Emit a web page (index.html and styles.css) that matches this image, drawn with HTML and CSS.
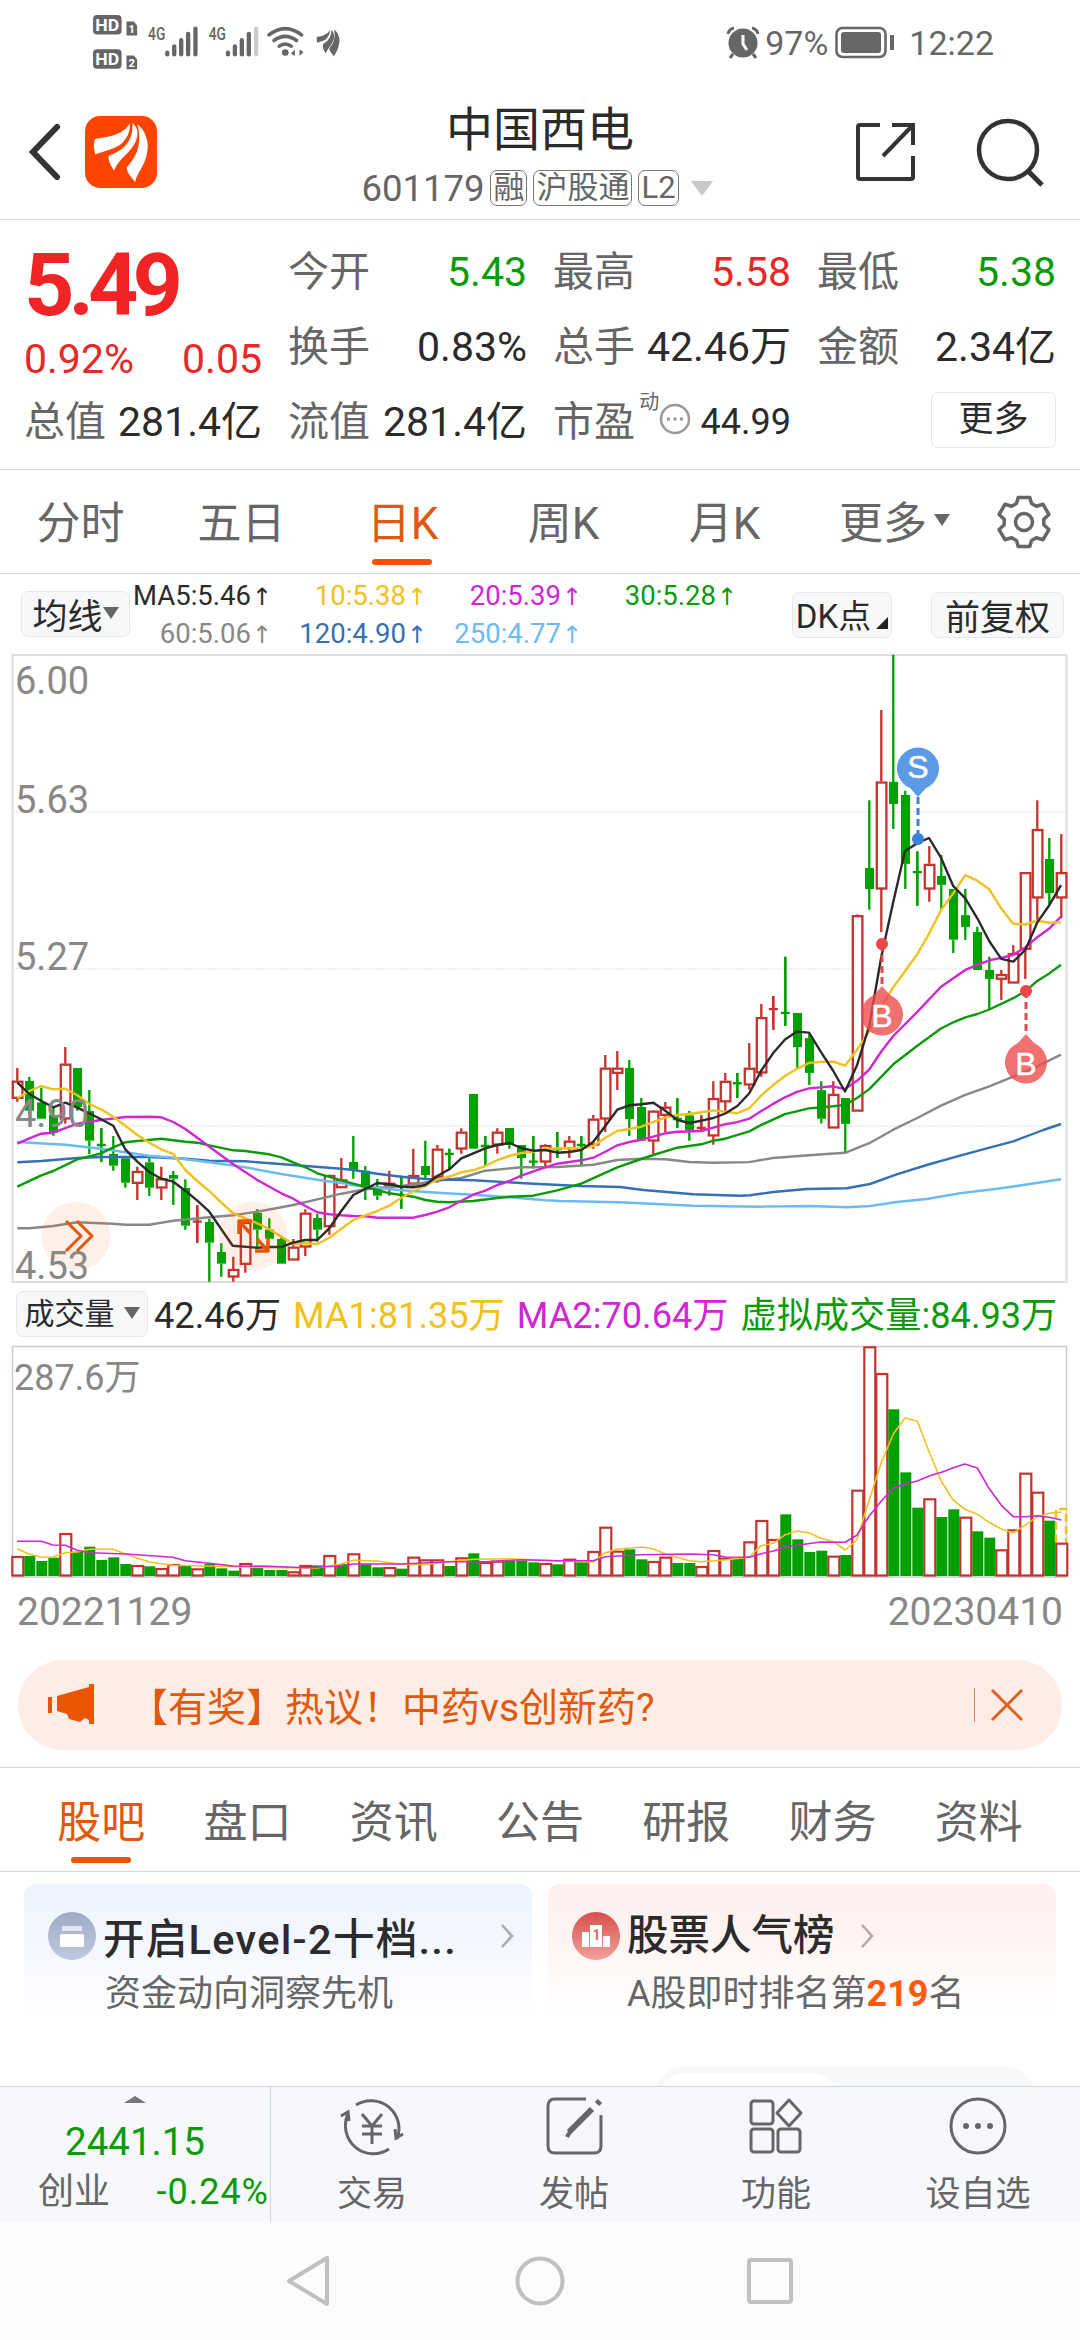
FILE: index.html
```html
<!DOCTYPE html>
<html lang="zh-CN">
<head>
    <meta charset="utf-8">
    <title>中国西电 601179</title>
    <link rel="stylesheet" href="styles.css">
</head>
<body>
<div class="status">
    <svg class="status-left" viewBox="216 40 750 175" width="250" height="58">
        <g fill="#666">
            <rect x="217" y="46" width="86" height="59" rx="12"/>
            <rect x="217" y="149" width="86" height="59" rx="12"/>
            <path d="M318 66h22l10 12v30h-32z"/>
            <path d="M318 168h22l10 12v30h-32z"/>
        </g>
        <g fill="#fff" font-weight="bold" font-size="52">
            <text x="224" y="95" textLength="72" lengthAdjust="spacingAndGlyphs">HD</text>
            <text x="224" y="198" textLength="72" lengthAdjust="spacingAndGlyphs">HD</text>
            <text x="324" y="101" font-size="34">1</text>
            <text x="324" y="204" font-size="34">2</text>
        </g>
        <g fill="#666" font-weight="500" font-size="55">
            <text x="383" y="121" textLength="52" lengthAdjust="spacingAndGlyphs">4G</text>
            <text x="566" y="121" textLength="52" lengthAdjust="spacingAndGlyphs">4G</text>
        </g>
        <g stroke="#666" stroke-width="13" stroke-linecap="round">
            <path d="M441 160v5M462 141v24M483 122v43M504 103v62M526 87v78"/>
            <path d="M624 160v5M645 141v24M666 122v43M687 103v62"/>
            <path d="M709 87v78" stroke="#ccc"/>
        </g>
        <g fill="none" stroke="#666" stroke-width="11" stroke-linecap="round">
            <path d="M748 106q49-38 98 0M763 123q34-25 68 0M779 140q18-13 36 0"/>
        </g>
        <circle cx="797" cy="159" r="10" fill="#666"/>
        <path d="M826 150v20l-12-8zM840 150v20l12-12z" fill="#666"/>
        <g fill="#666" transform="translate(806 -46) scale(.37)">
            <path d="M236 475C231 456 230 438 236 428C271 422 321 412 340 370C343 395 331 422 306 449C284 462 259 466 236 475z"/>
            <path d="M305 562C290 535 275 505 286 485C320 465 352 435 352 370C372 390 378 415 372 445C360 490 325 515 305 562z"/>
            <path d="M372 585C350 555 332 540 336 518C362 490 388 450 374 368C408 392 424 440 416 480C410 520 392 555 372 585z"/>
        </g>
    </svg>
    <div class="status-right">
        <svg viewBox="0 0 34 34" width="34" height="34">
            <circle cx="17" cy="17" r="14.5" fill="#666"/>
            <path d="M2 8q1-5 6-6M32 8q-1-5-6-6M7 28l-3 4M27 28l3 4" stroke="#666" stroke-width="3" fill="none"/>
            <path d="M17 9v9l4 6" stroke="#fff" stroke-width="3" fill="none"/>
        </svg>
        <span>97%</span>
        <svg class="battery" viewBox="0 0 60 34" width="60" height="34">
            <rect x="1.5" y="2" width="49" height="29" rx="6" fill="none" stroke="#666" stroke-width="2.5"/>
            <rect x="6" y="6" width="40" height="21" rx="3" fill="#666"/>
            <path d="M57 9v15" stroke="#666" stroke-width="4"/>
        </svg>
        <span>12:22</span>
    </div>
</div>

<div class="header">
    <svg class="back" viewBox="0 0 32 56" width="32" height="56"><path d="M28 3L4 28l24 25" fill="none" stroke="#333" stroke-width="6" stroke-linecap="round"/></svg>
    <svg class="logo" viewBox="196 349 217 217" width="72" height="72">
        <rect x="196" y="349" width="217" height="217" rx="46" fill="#ff4400"/>
        <g fill="#fff">
            <path d="M227 465C222 446 221 428 227 418C262 412 312 408 331 370C334 395 322 422 297 439C275 452 250 456 227 465z"/>
            <path d="M283 514C275 498 266 488 267 469C305 455 343 430 339 370C358 385 358 408 346 432C325 468 300 475 283 514z"/>
            <path d="M347 548C337 533 321 520 322 504C342 480 372 445 354 374C378 392 391 430 383 460C378 498 353 520 347 548z"/>
        </g>
    </svg>
    <div class="title">
        <h1>中国西电</h1>
        <div class="code">601179<i>融</i><i>沪股通</i><i>L2</i><b></b></div>
    </div>
    <svg class="share" viewBox="0 0 60 60" width="60" height="60">
        <path d="M24 3H4q-2 0-2 2v50q0 2 2 2h51q2 0 2-2V34M36 3h21v20M57 3L27 34" fill="none" stroke="#333" stroke-width="4"/>
    </svg>
    <svg class="search" viewBox="0 0 70 70" width="70" height="70">
        <circle cx="32" cy="32" r="29" fill="none" stroke="#333" stroke-width="4.5"/>
        <path d="M53 54l13 13" stroke="#333" stroke-width="5"/>
    </svg>
</div>

<div class="quote">
    <div class="main-price">
        <div class="price">5.49</div>
        <div class="cell red"><span>0.92%</span><span>0.05</span></div>
        <div class="cell"><label>总值</label><span>281.4亿</span></div>
    </div>
    <div class="cells">
        <div class="cell"><label>今开</label><span class="green">5.43</span></div>
        <div class="cell"><label>最高</label><span class="red">5.58</span></div>
        <div class="cell"><label>最低</label><span class="green">5.38</span></div>
        <div class="cell"><label>换手</label><span>0.83%</span></div>
        <div class="cell"><label>总手</label><span>42.46万</span></div>
        <div class="cell"><label>金额</label><span>2.34亿</span></div>
        <div class="cell"><label>流值</label><span>281.4亿</span></div>
        <div class="cell pe"><label>市盈</label><sup>动</sup>
            <svg viewBox="0 0 32 32" width="32" height="32"><circle cx="16" cy="16" r="14" fill="none" stroke="#999" stroke-width="2.5"/><path d="M8 16h3M14.500 16h3M21 16h3" stroke="#999" stroke-width="3"/></svg>
            <span>44.99</span></div>
        <div class="cell"><button class="more">更多</button></div>
    </div>
</div>

<div class="period">
    <a>分时</a><a>五日</a><a class="on">日K</a><a>周K</a><a>月K</a><a>更多<b class="tri"></b></a>
    <svg viewBox="-28 -28 56 56" width="56" height="56">
        <path d="M-5.800-24.500H5.800L7.500-18.500L12.300-15.800L19-17.700L24.900-7.600L19.800-2.800V2.800L24.900 7.600L19 17.700L12.300 15.800L7.500 18.500L5.800 24.500H-5.800L-7.500 18.500L-12.300 15.800L-19 17.700L-24.900 7.600L-19.800 2.800V-2.800L-24.900-7.600L-19-17.700L-12.300-15.800L-7.500-18.500z" fill="none" stroke="#666" stroke-width="3.500" stroke-linejoin="round"/>
        <circle r="8.500" fill="none" stroke="#666" stroke-width="3.500"/>
    </svg>
</div>

<div class="ma-bar">
    <div class="chip ma-chip">均线<b class="tri"></b></div>
    <div class="ma-list">
        <span class="c5">MA5:5.46<u>↑</u></span><span class="c10">10:5.38<u>↑</u></span><span class="c20">20:5.39<u>↑</u></span><span class="c30">30:5.28<u>↑</u></span>
        <span class="c60">60:5.06<u>↑</u></span><span class="c120">120:4.90<u>↑</u></span><span class="c250">250:4.77<u>↑</u></span>
    </div>
    <div class="chip dk">DK点<b class="corner"></b></div>
    <div class="chip fq">前复权</div>
</div>

<svg id="kline" class="pane" viewBox="0 654 1080 629" width="1080" height="629"></svg>

<div class="vol-bar">
    <div class="chip vol-chip">成交量<b class="tri"></b></div>
    <span>42.46万</span><span class="c10">MA1:81.35万</span><span class="c20">MA2:70.64万</span><span class="c30">虚拟成交量:84.93万</span>
</div>

<svg id="volume" class="pane" viewBox="0 1345 1080 233" width="1080" height="233"></svg>

<div class="dates"><span>20221129</span><span>20230410</span></div>

<div class="notice">
    <svg viewBox="0 0 48 42" width="48" height="42" fill="#e85504"><path d="M0 13h4v16H0zM9 12L41 3V0h5v40h-5v-4l-4-2-5 4-11-3-2-5-10-3z"/></svg>
    <p>【有奖】热议！中药vs创新药?</p>
    <svg class="close" viewBox="0 0 34 34" width="34" height="34"><path d="M2 2l30 30M32 2L2 32" stroke="#e06020" stroke-width="3"/></svg>
</div>

<div class="tabs">
    <a class="on">股吧</a><a>盘口</a><a>资讯</a><a>公告</a><a>研报</a><a>财务</a><a>资料</a>
</div>

<div class="content">
    <div class="card blue">
        <svg class="badge" viewBox="0 0 48 48" width="48" height="48">
            <defs><linearGradient id="gb" x2="0" y2="1"><stop stop-color="#9faac6"/><stop offset="1" stop-color="#bfc9de"/></linearGradient></defs>
            <circle cx="24" cy="24" r="24" fill="url(#gb)"/>
            <rect x="14" y="14" width="20" height="5" fill="#e3e7f0"/><rect x="12" y="22" width="24" height="13" rx="1.500" fill="#fff"/>
        </svg>
        <h3>开启Level-2十档...</h3>
        <svg class="go" viewBox="0 0 14 24" width="14" height="24"><path d="M2 1l10 11L2 23" fill="none" stroke="#aaa" stroke-width="2.500"/></svg>
        <p>资金动向洞察先机</p>
    </div>
    <div class="card pink">
        <svg class="badge" viewBox="0 0 48 48" width="48" height="48">
            <defs><linearGradient id="gr" x2="0" y2="1"><stop stop-color="#d8504c"/><stop offset="1" stop-color="#f0a09a"/></linearGradient></defs>
            <circle cx="24" cy="24" r="24" fill="url(#gr)"/>
            <path d="M10 20h7v15h-7zM18 13h12v22H18zM31 24h7v11h-7z" fill="#fff"/>
            <text x="20.500" y="28" font-size="14" font-weight="bold" fill="#dc6660">1</text>
        </svg>
        <h3>股票人气榜</h3>
        <svg class="go" viewBox="0 0 14 24" width="14" height="24"><path d="M2 1l10 11L2 23" fill="none" stroke="#aaa" stroke-width="2.500"/></svg>
        <p>A股即时排名第<em>219</em>名</p>
    </div>
    <div class="switch"><div></div></div>
</div>

<div class="toolbar">
    <div class="index">
        <b></b>
        <div class="green idx">2441.15</div>
        <div class="idx-row"><span>创业</span><span class="green">-0.24%</span></div>
    </div>
    <a>
        <svg viewBox="0 0 66 60" width="66" height="60" fill="none" stroke="#666" stroke-width="3">
            <path d="M17 9A28 28 0 0 1 58 43M50 53A28 28 0 0 1 9 18M2 20l7-4 1 9M64 38l-7 4-1-9"/>
            <path d="M23 18l10 12 10-12M23 30h20M23 38h20M33 30v18"/>
        </svg>交易
    </a>
    <a>
        <svg viewBox="0 0 60 60" width="60" height="60" fill="none" stroke="#666" stroke-width="3">
            <path d="M42 3H11q-7 0-7 7v40q0 7 7 7h39q7 0 7-7V19"/>
            <path d="M48 13L25 36M53 8l3-3" stroke-width="6"/><path d="M27 34l-4 7" stroke-width="4"/>
        </svg>发帖
    </a>
    <a>
        <svg viewBox="0 0 60 60" width="60" height="60" fill="none" stroke="#666" stroke-width="3">
            <rect x="5" y="5" width="22" height="23" rx="3"/><rect x="5" y="33" width="22" height="23" rx="3"/><rect x="32" y="33" width="22" height="23" rx="3"/>
            <path d="M43 4l12 13-12 13-12-13z" stroke-linejoin="round"/>
        </svg>功能
    </a>
    <a>
        <svg viewBox="0 0 60 60" width="60" height="60">
            <circle cx="30" cy="30" r="27" fill="none" stroke="#666" stroke-width="3"/>
            <g fill="#666"><circle cx="18" cy="30" r="3"/><circle cx="30" cy="30" r="3"/><circle cx="42" cy="30" r="3"/></g>
        </svg>设自选
    </a>
</div>

<div class="sysnav">
    <svg viewBox="0 0 50 50" width="50" height="50"><path d="M42 2v46L4 25z"/></svg>
    <svg viewBox="0 0 50 50" width="50" height="50"><circle cx="25" cy="25" r="22.500"/></svg>
    <svg viewBox="0 0 50 50" width="50" height="50"><rect x="4" y="4" width="42" height="42" rx="2"/></svg>
</div>
<script src="chart.js"></script>
</body>
</html>
```
FILE: styles.css
```css
* {
    box-sizing: border-box;
}
body {
    margin: 0;
    width: 1080px;
    height: 2340px;
    overflow: hidden;
    background-color: #fff;
    color: #2b2b2b;
    font-family: Roboto, "Noto Sans CJK SC", sans-serif;
}
h1, h3, p {
    margin: 0;
}
svg {
    display: block;
    flex: none;
}
.red, .red span {
    color: #e82828;
}
.green, .cell .green {
    color: #0a9a0a;
}
.tri {
    display: inline-block;
    border: solid transparent;
    border-width: 12px 8px 0;
    border-top-color: #666;
}

/* status bar */
.status {
    height: 86px;
    padding: 13px 86px 0 92px;
    display: flex;
    justify-content: space-between;
    align-items: flex-start;
}
.status-right {
    display: flex;
    align-items: center;
    height: 34px;
    margin-top: 13px;
    font-size: 34px;
    color: #666;
}
.status-right span {
    margin-left: 5px;
}
.status-right .battery {
    margin: 0 9px 0 7px;
}

/* header */
.header {
    height: 134px;
    border-bottom: 1px solid #d6d6d6;
    padding: 0 34px 0 29px;
    display: flex;
    align-items: flex-start;
}
.back {
    margin-top: 38px;
}
.logo {
    margin: 30px 0 0 24px;
}
.title {
    flex: 1;
    text-align: center;
    margin-left: 61px;
}
.title h1 {
    font-size: 47px;
    line-height: 60px;
    margin: 14px 0 0 6px;
    font-weight: 400;
}
.code {
    display: flex;
    justify-content: center;
    align-items: center;
    height: 40px;
    margin-top: 8px;
    font-size: 36.500px;
    color: #666;
}
.code i {
    font-style: normal;
    font-size: 31px;
    line-height: 33px;
    height: 36px;
    border: 1.5px solid #777;
    border-radius: 7px;
    padding: 0 2px;
    margin-left: 6px;
}
.code b {
    border: solid transparent;
    border-width: 15px 11px 0;
    border-top-color: #c8c8c8;
    margin-left: 12px;
}
.share {
    margin: 36px 60px 0 0;
}
.search {
    margin-top: 32px;
}

/* quote */
.quote {
    height: 250px;
    border-bottom: 1px solid #d6d6d6;
    padding: 15px 24px 0;
    display: flex;
    gap: 26px;
}
.main-price {
    width: 239px;
}
.price {
    color: #f02424;
    font-size: 88px;
    font-weight: 700;
    letter-spacing: -6px;
    line-height: 100px;
    height: 87px;
}
.cells {
    flex: 1;
    display: grid;
    grid-template-columns: 239px 238px 239px;
    column-gap: 26px;
    grid-auto-rows: 75px;
}
.cell {
    display: flex;
    justify-content: space-between;
    align-items: center;
    height: 75px;
    font-size: 41px;
    line-height: 75px;
    white-space: nowrap;
}
.main-price .cell:last-child {
    margin-top: -12px;
}
.cell label {
    color: #666;
}
.cell span {
    color: #2b2b2b;
}
.cell .red {
    color: #e82828;
}
.main-price .red span {
    color: #e82828;
}
.pe sup {
    font-size: 20px;
    line-height: 20px;
    color: #666;
    align-self: flex-start;
    margin-top: 7px;
}
.pe svg {
    margin: -7px 0 0 -4px;
}
.pe span {
    font-size: 36px;
    margin-left: 5px;
}
.more {
    margin-left: auto;
    width: 125px;
    height: 56px;
    font: 35px/50px Roboto, "Noto Sans CJK SC", sans-serif;
    color: #2b2b2b;
    background-color: #fff;
    border: 1.5px solid #e4e6e6;
    border-radius: 7px;
    margin-top: -6px;
}

/* chart period */
.period {
    height: 104px;
    border-bottom: 1px solid #d6d6d6;
    display: grid;
    grid-template-columns: repeat(6, 161px) 114px;
    align-items: center;
    justify-items: center;
}
.period a, .tabs a {
    font-size: 44px;
    line-height: 98px;
    height: 103px;
    color: #666;
    white-space: nowrap;
    padding-top: 5px;
    display: flex;
    flex-direction: column;
    align-items: center;
}
.period a:nth-child(6) {
    flex-direction: row;
    margin-left: 18px;
}
.period .tri {
    margin: -8px 0 0 7px;
}
.period .on, .tabs .on {
    color: #e2580e;
}
.on::after {
    content: "";
    width: 60px;
    height: 6px;
    border-radius: 3px;
    background-color: #e85504;
    margin-top: -14px;
}
.period svg {
    margin-left: 2px;
}

/* indicator bars */
.ma-bar {
    height: 80px;
    padding: 0 16px 0 21px;
    display: flex;
    align-items: flex-start;
}
.chip {
    background-color: #f7f8fa;
    border: 1px solid #e6e8ea;
    border-radius: 7px;
    height: 46px;
    margin-top: 17px;
    padding-bottom: 2px;
    display: flex;
    align-items: center;
    justify-content: center;
    font-size: 35px;
    white-space: nowrap;
}
.ma-chip {
    width: 109px;
}
.ma-list {
    width: 608px;
    margin-top: 3px;
    display: grid;
    grid-template-columns: 143px 155px 155px 155px;
    grid-auto-rows: 38px;
    font-size: 27.500px;
    line-height: 38px;
    text-align: right;
    white-space: nowrap;
}
.ma-list u {
    display: inline-block;
    width: 22px;
    text-decoration: none;
    text-align: center;
    font-family: "DejaVu Sans", sans-serif;
    font-size: 24px;
    line-height: 30px;
}
.dk {
    width: 100px;
    margin: 18px 0 0 54px;
    font-size: 33px;
}
.corner {
    border: solid transparent;
    border-width: 0 0 12px 12px;
    border-bottom-color: #222;
    margin: 18px 0 0 5px;
}
.fq {
    width: 133px;
    margin: 18px 0 0 auto;
}
.c5 { color: #2b2b2b; }
.c10 { color: #f2c11e; }
.c20 { color: #d026d6; }
.c30 { color: #0a9a0a; }
.c60 { color: #888; }
.c120 { color: #3470b8; }
.c250 { color: #6cbaf5; }

.vol-bar {
    height: 62px;
    padding-left: 16px;
    display: flex;
    gap: 12px;
    font-size: 36.200px;
    line-height: 65px;
    white-space: nowrap;
}
.vol-chip {
    width: 132px;
    margin: 8px -6px 0 0;
    font-size: 30px;
}
.vol-chip .tri {
    margin-left: 9px;
}
.dates {
    display: flex;
    justify-content: space-between;
    height: 82px;
    padding: 0 17px;
    font-size: 39px;
    line-height: 68px;
    color: #888;
}

/* notice */
.notice {
    margin: 0 18px 17px;
    height: 90px;
    border-radius: 45px;
    background-color: #fdede4;
    display: flex;
    align-items: center;
    padding: 0 38px 0 30px;
}
.notice p {
    flex: 1;
    margin: -3px 0 0 33px;
    font-size: 39px;
    color: #e2580e;
}
.close {
    box-sizing: content-box;
    border-left: 1.500px solid #d98a60;
    padding-left: 15px;
}

/* tabs */
.tabs {
    height: 105px;
    border-top: 1px solid #d6d6d6;
    border-bottom: 1px solid #d6d6d6;
    padding: 0 28px;
    display: grid;
    grid-template-columns: repeat(7, 1fr);
}
.tabs .on::after {
    margin-top: -16px;
}
.tabs a {
    line-height: 100px;
}

/* cards */
.content {
    height: 214px;
    padding: 12px 24px 0;
    display: grid;
    grid-template-columns: 508px 508px;
    grid-template-rows: 183px 19px;
    column-gap: 16px;
    overflow: hidden;
}
.card {
    height: 130px;
    border-radius: 12px 12px 0 0;
    padding-top: 21px;
    display: grid;
    grid-template-columns: 48px auto 1fr;
    grid-template-rows: 62px 54px;
    column-gap: 7px;
    align-items: center;
    padding-left: 24px;
}
.blue {
    background: linear-gradient(#ecf4fd, #f3f6ff 40%, #fff);
}
.pink {
    background: linear-gradient(#fdf0ef, #fff4f2 40%, #fff);
}
.card h3 {
    font-size: 41.500px;
    font-weight: 500;
    white-space: nowrap;
    line-height: 50px;
}
.card p {
    grid-column: 2 / 4;
    font-size: 36px;
    line-height: 50px;
    color: #666;
    white-space: nowrap;
    padding-left: 2px;
}
.pink p {
    padding-left: 0;
}
.blue h3 {
    padding-top: 7px;
    letter-spacing: 1.300px;
}
.blue .go {
    margin: 0 0 0 36px;
}
.pink .go {
    margin-left: 18px;
}
.card em {
    font-style: normal;
    font-weight: 700;
    color: #ff5a10;
}
.switch {
    grid-column: 1 / 3;
    justify-self: end;
    width: 382px;
    height: 60px;
    margin-right: 20px;
    border-radius: 30px;
    background-color: #f7f8fa;
    padding: 6px;
}
.switch div {
    width: 176px;
    height: 48px;
    border-radius: 24px;
    background-color: #fff;
}

/* bottom toolbar */
.toolbar {
    height: 136px;
    background-color: #f7f8fb;
    border-top: 1px solid #d0d3d8;
    display: grid;
    grid-template-columns: 271px repeat(4, 202px);
    grid-template-rows: 135px;
}
.toolbar a {
    display: flex;
    flex-direction: column;
    align-items: center;
    gap: 12px;
    padding-top: 9px;
    font-size: 35px;
    line-height: 54px;
    color: #666;
}
.index {
    border-right: 1px solid #d0d3d8;
    display: flex;
    flex-direction: column;
    align-items: center;
    padding-top: 9px;
}
.index b {
    border: solid transparent;
    border-width: 0 11px 7px;
    border-bottom-color: #777;
}
.idx {
    font-size: 38.500px;
    line-height: 50px;
    margin-top: 14px;
}
.idx-row {
    width: 100%;
    display: flex;
    justify-content: space-between;
    padding: 0 1px 0 38px;
    font-size: 36px;
    line-height: 50px;
    color: #666;
}
.idx-row .green {
    letter-spacing: 1px;
}
.sysnav {
    height: 118px;
    background-color: #fcfcfc;
    display: flex;
    justify-content: center;
    gap: 180px;
    padding-top: 34px;
}
.sysnav svg {
    fill: none;
    stroke: #c0c0c0;
    stroke-width: 4;
    stroke-linejoin: round;
}

/* chart text */
.axis {
    font-size: 38px;
    fill: #888;
}
.vol-max {
    font-size: 36px;
}
.pin {
    font-family: "Liberation Sans", sans-serif;
    font-size: 32px;
    fill: #fff;
    stroke: #fff;
    stroke-width: .5;
    text-anchor: middle;
}
```
FILE: chart.js
```js
var RED = "#c5332f", GREEN = "#00a000";
var X0 = 17.3, STEP = 12;

function cx(i) {
    return X0 + STEP * i;
}

// Each part has its own origin and scale: x = ox + px / 3, y = oy + py / sy
var A = {ox: 0, oy: 1020, sy: 3};
var B = {ox: 350, oy: 930, sy: 3};
var C = {ox: 700, oy: 640, sy: 2.9037};
var D = {ox: 560, oy: 1130, sy: 3};

// colour, high, body top, body bottom, low
var candles = [
    [A, "r 144 182 235 245,g 171 183 272 283,g 203 247 296 296,g 260 285 338 347,r 81 131 297 311,g 144 144 261 272,g 210 273 362 402,g 324 375 375 426,g 348 402 437 452,g 412 415 488 503,r 440 453 490 540,g 415 427 503 528,r 440 475 504 540,g 453 465 476 555,g 478 504 617 629,r 556 605 605 668,g 596 606 668 785,g 670 696 731 770,r 710 747 771 785,r 600 606 733 758,g 567 579 629 680,g 595 629 656 656,g 647 657 731 731,r 657 680 720 720,r 568 578 681 708,g 582 594 629 665,r 464 465 620 644,r 414 478 503 503"],
    [B, "g 618 696 720 746,g 708 722 773 810,g 747 770 797 810,r 722 758 768 797,g 737 770 770 836,r 656 735 762 768,g 632 708 735 750,r 645 656 742 758,g 656 672 672 720,r 595 605 657 671,g 492 492 656 656,g 618 648 648 708,r 595 605 645 671,g 594 594 645 656,g 645 645 684 746,g 618 695 695 715,r 643 645 696 708,g 606 657 657 684,r 618 632 656 684,g 618 645 645 705,r 555 566 645 656,r 375 413 567 606,r 363 413 430 480,g 390 414 567 618,g 504 531 632 632,r 541 542 633 672,r 516 530 556 606,g 504 567 567 594,g 543 556 600 632,r 556 594 594 606"],
    [C, "r 1281 1330 1440 1466,r 1257 1280 1341 1370,g 1257 1287 1287 1330,r 1170 1242 1292 1306,r 1057 1095 1257 1268,r 1034 1072 1072 1132,g 920 1083 1083 1120,g 1083 1083 1182 1243,g 1145 1156 1257 1292,g 1281 1307 1390 1404,r 1281 1318 1417 1417,g 1330 1330 1405 1492,r 797 799 1368 1368,g 465 662 723 783,r 203 411 723 848,g 43 412 476 549,g 438 450 650 723,g 614 674 674 772,r 598 650 723 760,g 624 685 711 785,g 723 723 870 909,g 723 799 833 871,g 833 848 958 958,g 920 958 984 1072,r 958 970 985 1045,r 886 909 996 996,r 674 674 898 984,r 465 549 749 820,g 575 636 735 770,r 563 674 749 808"]
];

var averages = [
    ["#888", A, "52,625 88,625 160,618 232,607 268,608 340,611 376,614 448,614 520,602 628,592 700,586 772,575 880,555 952,538 1024,521 1096,508", B, "46,778 154,768 262,752 334,744 406,722 514,712 622,711 730,704 802,690 874,686 946,688 1018,696 1090,698", C, "112,1517 148,1516 219,1504 327,1496 435,1489 508,1461 580,1422 652,1388 723,1352 796,1321 868,1296 940,1268 1012,1238 1083,1204"],
    ["#3470b8", A, "52,427 124,423 232,414 304,411 448,411 556,416 628,422 736,424 880,435 1024,446", B, "10,720 82,731 154,740 226,747 370,751 550,761", D, "0,165 60,168 180,171 250,180 400,193 540,197 570,196 640,186 740,177 860,175 930,162 1010,133 1100,105 1200,77 1300,50 1360,34 1450,0 1503,-18"],
    ["#6cbaf5", A, "52,366 196,374 304,386 448,407 520,413 628,427 736,442 844,462 952,479 1040,491", B, "0,764 46,770 154,781 262,788 370,794 478,802 586,811", D, "0,213 180,217 400,227 600,230 750,228 860,232 930,228 1010,216 1100,207 1200,190 1300,178 1370,168 1503,148"],
    ["#0a9a0a", A, "52,500 124,466 160,453 232,418 303,400 340,382 376,367 412,363 484,356 556,365 592,368 628,376 700,391 736,393 808,403 844,412 880,427 916,442 952,460 1024,481", B, "10,761 82,780 118,790 190,800 226,810 262,815 298,817 370,813 442,804 478,800 550,797 622,781 694,761 802,712 874,687 910,675 982,653 1054,643 1090,632", C, "76,1448 148,1427 184,1408 255,1377 327,1360 399,1354 435,1350 471,1330 508,1304 580,1232 652,1178 723,1128 760,1110 796,1096 832,1086 868,1073 940,1040 976,1020 1012,990 1048,968 1083,943"],
    ["#d026d6", A, "52,371 88,355 124,341 160,338 232,311 303,300 376,291 448,290 484,292 520,306 556,327 592,353 628,380 700,433 772,480 844,520 880,536 916,558 952,577 988,583 1024,586", B, "10,858 46,859 82,863 190,863 226,855 262,845 298,832 334,812 370,794 406,782 442,765 478,753 514,737 550,724 586,712 622,701 694,691 730,683 766,665 802,646 838,636 874,629 910,620 946,610 982,605 1054,603", C, "40,1416 76,1406 112,1400 148,1390 184,1368 219,1347 255,1328 291,1312 327,1302 399,1296 435,1304 471,1280 508,1247 544,1195 580,1150 652,1080 723,1007 796,958 832,943 868,930 904,923 940,914 976,893 1012,863 1048,838 1083,803"],
    ["#f2c11e", A, "52,235 88,213 124,198 160,208 196,206 232,226 268,252 303,268 340,290 376,317 412,345 448,368 484,388 520,402 556,450 592,483 628,513 664,548 700,580 736,595 772,610 808,628 844,650 880,672 916,670 952,672 988,653 1024,626", B, "10,870 46,856 82,843 118,827 154,803 190,783 226,768 262,748 298,740 334,727 370,721 406,708 442,690 478,678 514,669 550,665 586,657 658,654 694,656 730,648 766,623 802,603 838,597 874,590 910,576 946,563 982,555 1018,552 1054,547", C, "40,1366 76,1370 112,1374 148,1360 184,1322 219,1293 255,1266 291,1245 327,1228 363,1225 399,1224 435,1236 471,1190 508,1135 544,1065 580,1008 615,962 652,912 687,853 723,785 760,735 796,683 832,699 868,724 904,780 940,824 976,826 1012,815 1048,821 1083,820"],
    ["#2b2b2b", A, "52,188 88,222 124,243 160,262 196,248 232,263 268,280 303,298 340,317 376,388 412,425 448,456 484,476 520,485 556,512 592,542 628,575 698,677 772,683 808,681 844,681 880,668 916,660 952,660 988,625 1024,573", B, "10,795 46,777 82,759 118,763 154,770 190,772 226,765 262,738 298,718 334,685 370,670 406,655 442,645 478,639 514,654 550,662 586,660 622,668 658,666 694,660 730,635 766,588 802,539 838,526 874,523 910,518 946,542 982,570 1018,579 1054,572", C, "40,1388 76,1375 112,1353 148,1316 184,1250 219,1200 255,1160 291,1137 327,1140 363,1197 399,1250 435,1311 471,1235 508,1120 544,920 580,760 615,613 652,590 687,575 723,632 760,715 796,750 832,808 868,875 904,926 940,934 976,900 1012,820 1048,770 1083,712"]
];

function rect(x, y, w, h, attrs) {
    return '<rect x="' + x + '" y="' + y + '" width="' + w + '" height="' + h + '" ' + attrs + '/>';
}
function path(d, color, width, dash) {
    return '<path d="' + d + '" fill="none" stroke="' + color + '" stroke-width="' + width + '" stroke-linejoin="round"' + (dash ? ' stroke-dasharray="' + dash + '"' : '') + '/>';
}

function drawKline() {
    var out = rect(12.5, 655, 1054, 627, 'fill="none" stroke="#ddd" stroke-width="2"');
    [812, 969, 1126].forEach(function(y) {
        out += path("M13 " + y + "H1066", "#eee", 2, "2 1");
    });
    var i = 0;
    candles.forEach(function(part) {
        var f = part[0];
        part[1].split(",").forEach(function(row) {
            var v = row.split(" ");
            var color = v[0] == "r" ? RED : GREEN;
            var y = v.slice(1).map(function(n) { return f.oy + n / f.sy; });
            var x = cx(i++);
            out += path("M" + x + " " + y[0] + "V" + y[1] + "M" + x + " " + y[2] + "V" + y[3], color, 2.3);
            if (v[2] == v[3]) {
                out += path("M" + (x - 4.5) + " " + y[1] + "h9M" + x + " " + y[0] + "V" + y[3], color, 2.3);
            } else if (v[0] == "r") {
                out += rect(x - 4.5, y[1] + 1, 9.6, Math.max(y[2] - y[1] - 1.5, 1), 'fill="#fff" stroke="' + RED + '" stroke-width="2.3"');
            } else {
                out += rect(x - 4.3, y[1], 9, y[2] - y[1], 'fill="' + GREEN + '"');
            }
        });
    });
    averages.forEach(function(line) {
        var pts = [];
        for (var k = 1; k < line.length; k += 2) {
            var f = line[k];
            line[k + 1].split(" ").forEach(function(p) {
                p = p.split(",");
                pts.push((f.ox + p[0] / 3).toFixed(1) + " " + (f.oy + p[1] / f.sy).toFixed(1));
            });
        }
        out += path("M" + pts.join("L"), line[0], 2.4);
    });

    // buy / sell pins
    out += path("M918 797V838", "#3a80dd", 3, "7 4");
    out += '<circle cx="918" cy="839" r="6" fill="#3a80dd"/>';
    out += '<path d="M918 797l-8-9a21 21 0 1 1 16 0z" fill="#4a8fe6" opacity=".9"/>';
    out += '<text class="pin" x="918" y="778">S</text>';
    [[882, 944, 1015], [1026, 991, 1063]].forEach(function(p) {
        out += path("M" + p[0] + " " + p[1] + "V" + (p[2] - 29), "#e04a4a", 3, "7 4");
        out += '<circle cx="' + p[0] + '" cy="' + p[1] + '" r="6" fill="#ec4646"/>';
        out += '<path d="M' + p[0] + ' ' + (p[2] - 29) + 'l8 9a21 21 0 1 1-16 0z" fill="#ee4c4c" opacity=".8"/>';
        out += '<text class="pin" x="' + p[0] + '" y="' + (p[2] + 12) + '">B</text>';
    });

    // floating buttons
    out += '<g fill="#ff6a20" opacity=".1"><circle cx="76" cy="1236" r="34.500"/><circle cx="253" cy="1236" r="34.500"/></g>';
    out += path("M66 1221l15 15-15 15M77 1221l15 15-15 15", "#e2580e", 3);
    out += path("M239 1234v-13h13M239 1221l11 12M268 1238v13h-13M268 1251l-11-12", "#e85504", 3.5);

    out += '<g class="axis"><text x="15" y="694">6.00</text><text x="15" y="813">5.63</text><text x="15" y="970">5.27</text><text x="15" y="1127">4.90</text><text x="15" y="1279">4.53</text></g>';
    document.getElementById("kline").innerHTML = out;
}

// bar tops, measured down from y = 1280 in thirds
var volumes = "r828 g828 g843 g833 r759 g815 g800 g840 g832 g852 r855 g859 r864 r852 g858 r865 g852 g865 g872 r849 g862 g870 g870 r874 r855 g856 r825 g852 r820 g853 g862 r861 g866 r830 r838 r838 g858 r832 g820 r846 r842 g842 g842 g847 r849 g853 r836 g847 r813 r740 r812 g808 g838 r843 r830 g849 g849 r858 r810 r833 g835 r784 r720 r777 g703 g778 g816 g812 r827 g825 r629 r199 r279 g388 g577 g683 r655 g711 g688 r710 g754 g773 r808 r748 r578 r635 g722 r788";
var volMa = [
    ["#f2c11e", "25,806 42,822 60,832 77,831 95,818 112,816 130,808 164,808 182,822 199,834 217,846 251,856 304,858 339,860 408,863 460,864 495,852 513,841 548,843 582,853 617,854 652,845 687,838 739,836 791,841 861,846 879,818 896,808 931,801 948,806 966,822 1001,842 1018,845 1053,840 1088,831 1105,797 1123,790 1140,764 1157,753 1175,759 1192,775 1210,785 1227,810 1244,780 1262,660 1280,545 1297,462 1314,414 1332,424 1349,515 1367,605 1384,660 1401,688 1419,703 1436,727 1454,747 1471,759 1488,736 1506,710 1523,700 1541,696"],
    ["#d026d6", "25,784 60,784 77,795 95,796 112,811 130,818 182,822 251,832 269,842 304,850 339,858 391,859 443,863 495,858 513,852 582,852 652,845 704,845 757,839 809,842 861,842 879,830 931,824 1001,822 1035,824 1053,831 1088,832 1105,821 1123,813 1140,801 1157,796 1192,786 1227,787 1244,766 1262,708 1280,662 1297,624 1314,612 1332,603 1349,588 1367,577 1384,563 1401,552 1419,564 1436,625 1454,676 1471,710 1488,710 1506,707 1523,712 1541,720"]
];

function drawVolume() {
    var out = rect(12.5, 1346.5, 1054, 230.5, 'fill="none" stroke="#ccc" stroke-width="1.5"');
    out += '<g class="axis"><text class="vol-max" x="14" y="1390">287.6万</text></g>';
    volumes.split(" ").forEach(function(v, i) {
        var top = 1280 + v.slice(1) / 3;
        var x = cx(i);
        if (v[0] == "r") {
            out += rect(x - 5, top + 1, 11, 1574.5 - top, 'fill="#fff" stroke="' + RED + '" stroke-width="2.2"');
        } else {
            out += rect(x - 5, top, 11, 1576 - top, 'fill="' + GREEN + '"');
        }
    });
    // projected volume of the current day
    out += path("M1056 1542V1509H1066V1542", "#f2c11e", 2.5, "8 4");
    volMa.forEach(function(line) {
        var d = line[1].split(" ").map(function(p) {
            p = p.split(",");
            return (p[0] / 1.4519).toFixed(1) + " " + (1280 + p[1] / 3).toFixed(1);
        }).join("L");
        out += path("M" + d, line[0], 1.6);
    });
    document.getElementById("volume").innerHTML = out;
}

drawKline();
drawVolume();
```
